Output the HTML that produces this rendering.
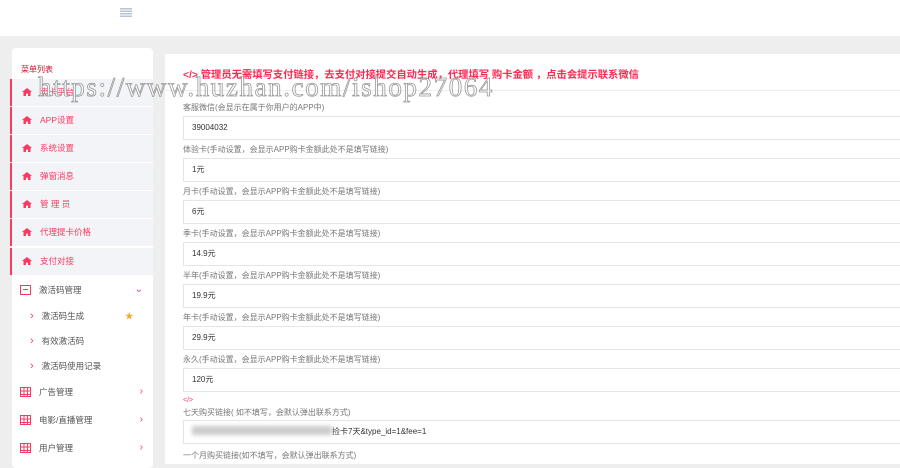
<!DOCTYPE html>
<html><head><meta charset="utf-8"><style>
*{margin:0;padding:0;box-sizing:border-box}
body{width:900px;height:460px;overflow:hidden;background:#eeeeee;font-family:"Liberation Sans","Noto Sans CJK SC",sans-serif;position:relative;font-size:9px;color:#666}
.top{position:absolute;left:0;top:0;width:900px;height:36px;background:#fff}
.ham{position:absolute;left:120px;top:8px;width:12px;height:9px;background:repeating-linear-gradient(#b8c4d4 0 1.5px,#fff 1.5px 2.5px)}
.side{position:absolute;left:12px;top:48px;width:141px;height:420px;background:#fff;border-radius:4px}
.st{position:absolute;left:9px;top:16px;color:#c8102e;font-size:8px}
.it{position:absolute;left:-2px;width:143px;height:27px;background:#f2f4f8;border-left:2px solid #ff3860;color:#ff3860;font-size:8.5px;line-height:27px;padding-left:10px}
.it b{display:inline-block;width:10px;height:8px;margin-right:8px;vertical-align:-1px;background:#ff3860;clip-path:polygon(50% 0,100% 50%,85% 50%,85% 100%,60% 100%,60% 70%,40% 70%,40% 100%,15% 100%,15% 50%,0 50%)}
.g{position:absolute;left:8px;width:133px;font-size:8.5px;color:#555;line-height:14px}
.g .ic{display:inline-block;width:11px;height:10px;border:1.5px solid #ff3860;margin-right:8px;vertical-align:-2px;background:repeating-linear-gradient(90deg,transparent 0 2.5px,#ff3860 2.5px 3.5px),repeating-linear-gradient(transparent 0 2.5px,#ff3860 2.5px 3.5px)}
.g .ar{position:absolute;right:10px;color:#ff3860;font-size:10px}
.sub{position:absolute;left:18px;font-size:8.5px;color:#555}
.sub i{color:#ff3860;font-style:normal;margin-right:8px;font-size:11px}
.main{position:absolute;left:165px;top:54px;width:735px;height:410px;background:#fff}
.hd{position:absolute;left:18px;top:12px;color:#ff2850;font-weight:bold;font-size:10.3px}
.hl{position:absolute;left:0;top:36px;width:735px;height:1px;background:#eee}
.lb{position:absolute;left:18px;font-size:8px;color:#777}
.in{position:absolute;left:18px;width:720px;height:24px;border:1px solid #e6e6e6;font-size:8px;color:#333;padding-left:8px;line-height:22px}
.wm{position:absolute;left:38px;top:72px;font-family:"Liberation Serif",serif;font-size:27px;letter-spacing:1.6px;color:rgba(255,255,255,.3);-webkit-text-stroke:0.8px #999;white-space:nowrap}
</style></head><body>
<div class="top"><div class="ham"></div></div>
<div class="side">
<div class="st">菜单列表</div>
<div class="it" style="top:31px"><b></b>卖卡平台</div>
<div class="it" style="top:59px"><b></b>APP设置</div>
<div class="it" style="top:87px"><b></b>系统设置</div>
<div class="it" style="top:115px"><b></b>弹窗消息</div>
<div class="it" style="top:143px"><b></b>管 理 员</div>
<div class="it" style="top:171px"><b></b>代理提卡价格</div>
<div class="it" style="top:200px"><b></b>支付对接</div>
<div class="g" style="top:235px"><span class="ic" style="background:linear-gradient(#ff3860,#ff3860) 2px 3px/5px 1px no-repeat"></span>激活码管理<span class="ar">⌄</span></div>
<div class="sub" style="top:262px"><i>›</i>激活码生成<span style="position:absolute;left:95px;color:#f5a623">★</span></div>
<div class="sub" style="top:287px"><i>›</i>有效激活码</div>
<div class="sub" style="top:312px"><i>›</i>激活码使用记录</div>
<div class="g" style="top:337px"><span class="ic"></span>广告管理<span class="ar">›</span></div>
<div class="g" style="top:365px"><span class="ic"></span>电影/直播管理<span class="ar">›</span></div>
<div class="g" style="top:393px"><span class="ic"></span>用户管理<span class="ar">›</span></div>
</div>
<div class="main">
<div class="hd">&lt;/&gt; 管理员无需填写支付链接，去支付对接提交自动生成，代理填写 购卡金额 ，点击会提示联系微信</div>
<div class="hl"></div>
<div class="lb" style="top:48px">客服微信(会显示在属于你用户的APP中)</div>
<div class="in" style="top:62px">39004032</div>
<div class="lb" style="top:90px">体验卡(手动设置，会显示APP购卡金额此处不是填写链接)</div>
<div class="in" style="top:104px">1元</div>
<div class="lb" style="top:132px">月卡(手动设置，会显示APP购卡金额此处不是填写链接)</div>
<div class="in" style="top:146px">6元</div>
<div class="lb" style="top:174px">季卡(手动设置，会显示APP购卡金额此处不是填写链接)</div>
<div class="in" style="top:188px">14.9元</div>
<div class="lb" style="top:216px">半年(手动设置，会显示APP购卡金额此处不是填写链接)</div>
<div class="in" style="top:230px">19.9元</div>
<div class="lb" style="top:258px">年卡(手动设置，会显示APP购卡金额此处不是填写链接)</div>
<div class="in" style="top:272px">29.9元</div>
<div class="lb" style="top:300px">永久(手动设置，会显示APP购卡金额此处不是填写链接)</div>
<div class="in" style="top:314px">120元</div>
<div class="lb" style="top:343px;color:#ff3860;font-size:7px">&lt;/&gt;</div>
<div class="lb" style="top:353px">七天购买链接( 如不填写，会默认弹出联系方式)</div>
<div class="in" style="top:366px"><span style="display:inline-block;width:140px;height:9px;background:#ccc;vertical-align:-1px;filter:blur(2px)"></span>捡卡7天&amp;type_id=1&amp;fee=1</div>
<div class="lb" style="top:396px">一个月购买链接(如不填写，会默认弹出联系方式)</div>
</div>
<div class="wm">https://www.huzhan.com/ishop27064</div>
</body></html>
